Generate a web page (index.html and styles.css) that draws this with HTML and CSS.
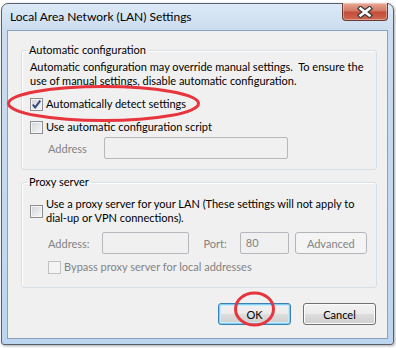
FILE: index.html
```html
<!DOCTYPE html>
<html lang="en">
<head>
    <meta charset="UTF-8">
    <meta name="viewport" content="width=device-width, initial-scale=1.0">
    <title>Local Area Network (LAN) Settings</title>
    <link rel="stylesheet" href="styles.css">
</head>
<body>
    <div class="window">
        <div class="titlebar">
            <span class="title">Local Area Network (LAN) Settings</span>
            <button class="close" aria-label="Close">
                <svg width="16" height="12" viewBox="0 0 16 12">
                    <path d="M3.5 2.5 L12.5 9.5 M12.5 2.5 L3.5 9.5" stroke="#3b3b3b" stroke-width="5" stroke-linecap="square"/>
                    <path d="M3.5 2.5 L12.5 9.5 M12.5 2.5 L3.5 9.5" stroke="#fff" stroke-width="2.6" stroke-linecap="square"/>
                </svg>
            </button>
        </div>

        <div class="client">
            <fieldset class="group group-auto">
                <legend>Automatic configuration</legend>
                <p class="note">Automatic configuration may override manual settings.&nbsp; To ensure the<br>use of manual settings, disable automatic configuration.</p>

                <label class="check row-detect">
                    <span class="box">
                        <svg width="11" height="11" viewBox="0 0 11 11">
                            <path d="M1.8 5.6 L4.2 8.4 L9.3 1.6" fill="none" stroke="#34467a" stroke-width="1.9"/>
                        </svg>
                    </span>
                    Automatically detect settings
                </label>
                <label class="check row-script">
                    <span class="box"></span>
                    Use automatic configuration script
                </label>

                <div class="field-row row-address">
                    <span class="field-label disabled">Address</span>
                    <span class="input input-script"></span>
                </div>
            </fieldset>

            <fieldset class="group group-proxy">
                <legend>Proxy server</legend>
                <label class="check row-proxy">
                    <span class="box"></span>
                    <span>Use a proxy server for your LAN (These settings will not apply to<br>dial-up or VPN connections).</span>
                </label>

                <div class="field-row row-proxy-address">
                    <span class="field-label disabled">Address:</span>
                    <span class="input input-addr"></span>
                    <span class="field-label disabled port-label">Port:</span>
                    <span class="input input-port">80</span>
                    <span class="btn btn-disabled">Advanced</span>
                </div>

                <label class="check disabled row-bypass">
                    <span class="box"></span>
                    Bypass proxy server for local addresses
                </label>
            </fieldset>

            <div class="actions">
                <button class="btn btn-default">OK</button>
                <button class="btn">Cancel</button>
            </div>
        </div>
    </div>

    <svg class="marks" width="396" height="348" viewBox="0 0 396 348">
        <ellipse cx="103.5" cy="103.5" rx="95" ry="17" fill="none" stroke="#e8343c" stroke-width="3"/>
        <ellipse cx="254.5" cy="309" rx="19" ry="16" fill="none" stroke="#e8343c" stroke-width="3"/>
    </svg>
</body>
</html>
```

FILE: styles.css
```css
* {
    margin: 0;
    padding: 0;
    box-sizing: border-box;
}

body {
    position: relative;
    width: 396px;
    height: 348px;
    padding-top: 3px;
    overflow: hidden;
    background-color: #fff;
    font-family: Lato, "Noto Sans", sans-serif;
    font-size: 11px;
    color: #000;
}

.window {
    display: flex;
    flex-direction: column;
    width: 393px;
    height: 342px;
    margin-left: 1px;
    padding: 0 5px 5px;
    border: 1px solid #57606c;
    border-radius: 7px 7px 3px 3px;
    background: linear-gradient(#dce9f6, #cadcf0 28px, #bcd6f0);
    box-shadow: 1px 1px 3px rgba(0, 0, 0, 0.35);
}

.titlebar {
    display: flex;
    justify-content: space-between;
    align-items: flex-start;
    height: 26px;
}

.title {
    padding: 6px 0 0 3px;
    font-size: 12px;
    line-height: 14px;
}

.close {
    display: flex;
    justify-content: center;
    align-items: center;
    width: 46px;
    height: 18px;
    margin-top: -1px;
    border: 1px solid #6b3a33;
    border-top: none;
    border-radius: 0 0 4px 4px;
    background: linear-gradient(#e9a996, #d27a67 45%, #c44d38 55%, #cf6a52);
    box-shadow: inset 0 0 0 1px rgba(255, 255, 255, 0.35);
}

.client {
    flex: 1;
    padding: 12px 10px 0 13px;
    border: 1px solid #8aa1bb;
    background-color: #f0f0f0;
}

.group {
    padding: 3px 8px 10px;
    border: 1px solid #d5dfe5;
    border-radius: 3px;
    box-shadow: inset 1px 1px 0 #fff;
}

.group legend {
    margin-left: -3px;
    padding: 0 2px;
    line-height: 14px;
}

.group-proxy {
    margin-top: 5px;
    padding-top: 8px;
    padding-bottom: 13px;
}

.note {
    line-height: 14px;
}

.check {
    display: flex;
    align-items: center;
    gap: 3px;
    line-height: 14px;
}

.box {
    display: flex;
    justify-content: center;
    align-items: center;
    flex: none;
    width: 13px;
    height: 13px;
    border: 1px solid #8f8f8f;
    background: linear-gradient(135deg, #d2d5da, #f7f7f7);
    box-shadow: inset 0 0 0 1px #f4f4f4;
}

.check.disabled {
    color: #838383;
}

.check.disabled .box {
    border-color: #c2c2c2;
    background: #f4f4f4;
}

.row-detect {
    margin-top: 9px;
}

.row-script {
    margin-top: 9px;
}

.field-row {
    display: flex;
    align-items: center;
}

.field-label {
    padding-left: 18px;
}

.disabled {
    color: #838383;
}

.input {
    height: 22px;
    padding: 3px 5px;
    border: 1px solid #b4b7bc;
    border-radius: 2px;
    color: #838383;
    line-height: 14px;
}

.row-address {
    margin-top: 3px;
}

.input-script {
    width: 184px;
    margin-left: 17px;
}

.row-proxy-address {
    margin-top: 7px;
}

.input-addr {
    width: 87px;
    margin-left: 12px;
}

.port-label {
    padding-left: 15px;
}

.input-port {
    width: 49px;
    margin-left: 13px;
}

.row-bypass {
    margin-top: 6px;
    padding-left: 18px;
}

.btn {
    display: flex;
    justify-content: center;
    align-items: center;
    width: 73px;
    height: 22px;
    border: 1px solid #707070;
    border-radius: 3px;
    background: linear-gradient(#f2f2f2, #ebebeb 50%, #dddddd 50%, #cfcfcf);
    box-shadow: inset 0 0 0 1px #fbfbfb;
    font-family: inherit;
    font-size: 11px;
    color: #000;
}

.btn-disabled {
    width: 72px;
    margin-left: 6px;
    border-color: #b2b6ba;
    background: #f4f4f4;
    box-shadow: none;
    color: #838383;
}

.btn-default {
    border-color: #3c7fb1;
    box-shadow: inset 0 0 0 1px #7fd0f4, inset 0 0 0 2px #c7ebfa;
}

.actions {
    display: flex;
    justify-content: flex-end;
    gap: 12px;
    margin-top: 15px;
    padding-right: 1px;
}

.marks {
    position: absolute;
    left: 0;
    top: 0;
    pointer-events: none;
}
```
